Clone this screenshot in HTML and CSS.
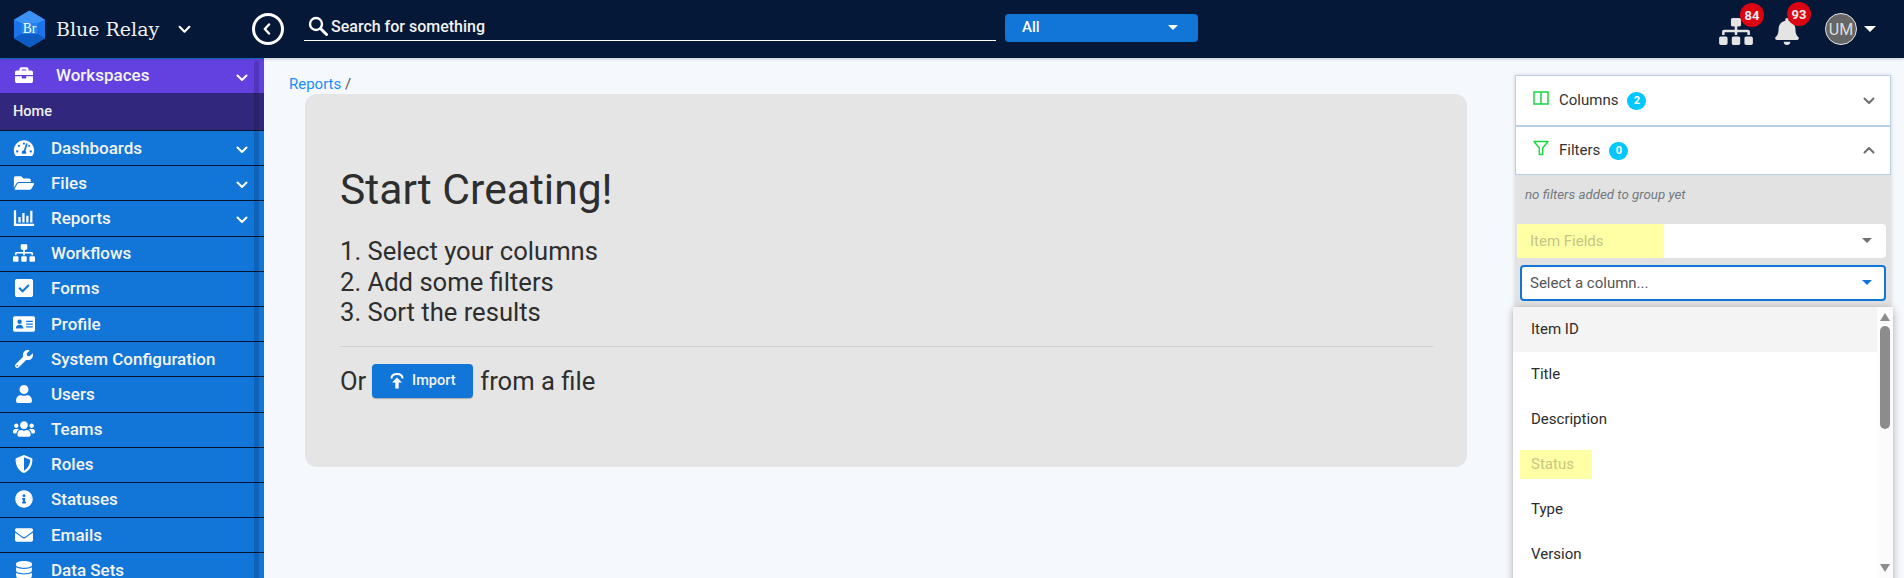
FILE: index.html
```html
<!DOCTYPE html>
<html lang="en">
<head>
<meta charset="utf-8">
<title>Blue Relay</title>
<link rel="stylesheet" href="styles.css">
</head>
<body>
<svg class="defs" aria-hidden="true">
  <symbol id="i-brief" viewBox="0 0 512 512"><path d="M320 336c0 8.84-7.16 16-16 16h-96c-8.84 0-16-7.16-16-16v-48H0v144c0 25.6 22.4 48 48 48h416c25.6 0 48-22.4 48-48V288H320v48zm144-208h-80V80c0-25.6-22.4-48-48-48H176c-25.6 0-48 22.4-48 48v48H48c-25.6 0-48 22.4-48 48v80h512v-80c0-25.6-22.4-48-48-48zm-144 0H192V96h128v32z"/></symbol>
  <symbol id="i-gauge" viewBox="0 0 576 512"><path d="M288 32C128.94 32 0 160.94 0 320c0 52.8 14.25 102.26 39.06 144.8 5.61 9.62 16.3 15.2 27.44 15.2h443c11.14 0 21.83-5.58 27.44-15.2C561.75 422.26 576 372.8 576 320c0-159.06-128.94-288-288-288zm0 64c14.71 0 26.58 10.13 30.32 23.65-1.11 2.26-2.64 4.23-3.45 6.67l-9.22 27.67c-5.13 3.49-10.97 6.01-17.64 6.01-17.67 0-32-14.33-32-32S270.33 96 288 96zM96 384c-17.67 0-32-14.33-32-32s14.33-32 32-32 32 14.33 32 32-14.33 32-32 32zm48-160c-17.67 0-32-14.33-32-32s14.33-32 32-32 32 14.33 32 32-14.33 32-32 32zm246.77-72.41l-61.33 184C343.13 347.33 352 364.54 352 384c0 11.72-3.38 22.55-8.88 32H232.88c-5.5-9.45-8.88-20.28-8.88-32 0-33.94 26.5-61.43 59.9-63.59l61.34-184.01c4.17-12.56 17.73-19.45 30.36-15.17 12.57 4.19 19.35 17.79 15.17 30.36zm14.66 57.2l15.52-46.55c3.47-1.29 7.13-2.23 11.05-2.23 17.67 0 32 14.33 32 32s-14.33 32-32 32c-11.38-.01-20.89-6.28-26.57-15.22zM480 384c-17.67 0-32-14.33-32-32s14.33-32 32-32 32 14.33 32 32-14.33 32-32 32z"/></symbol>
  <symbol id="i-folder" viewBox="0 0 576 512"><path d="M572.694 292.093L500.27 416.248A63.997 63.997 0 0 1 444.989 448H45.025c-18.523 0-30.064-20.093-20.731-36.093l72.424-124.155A64 64 0 0 1 152 256h399.964c18.523 0 30.064 20.093 20.73 36.093zM152 224h328v-48c0-26.51-21.49-48-48-48H272l-64-64H48C21.49 64 0 85.49 0 112v278.046l69.077-118.418C86.214 242.25 117.989 224 152 224z"/></symbol>
  <symbol id="i-chart" viewBox="0 0 18 16"><path d="M0 1h2v12h16v2H0z"/><path d="M4 7h2v5H4zM7.5 3.5h2V12h-2zM11 6h2v6h-2zM14.500 1.500h2V12h-2z"/></symbol>
  <symbol id="i-sitemap" viewBox="0 0 640 512"><path d="M128 352H32c-17.67 0-32 14.33-32 32v96c0 17.67 14.33 32 32 32h96c17.67 0 32-14.33 32-32v-96c0-17.67-14.33-32-32-32zm-24-80h192v48h48v-48h192v48h48v-57.59c0-21.17-17.23-38.41-38.41-38.41H344v-64h40c17.67 0 32-14.33 32-32V32c0-17.67-14.33-32-32-32H256c-17.67 0-32 14.33-32 32v96c0 17.67 14.33 32 32 32h40v64H94.41C73.23 224 56 241.23 56 262.41V320h48v-48zm264 80h-96c-17.67 0-32 14.33-32 32v96c0 17.67 14.33 32 32 32h96c17.67 0 32-14.33 32-32v-96c0-17.67-14.33-32-32-32zm240 0h-96c-17.67 0-32 14.33-32 32v96c0 17.67 14.33 32 32 32h96c17.67 0 32-14.33 32-32v-96c0-17.67-14.33-32-32-32z"/></symbol>
  <symbol id="i-check" viewBox="0 0 16 16"><path fill-rule="evenodd" d="M1.500 0h13A1.500 1.500 0 0 1 16 1.500v13a1.500 1.500 0 0 1-1.500 1.500h-13A1.500 1.500 0 0 1 0 14.500v-13A1.500 1.500 0 0 1 1.500 0zM6.700 12.200l6.300-6.300-1.300-1.300-5 5-2.400-2.400L3 8.500z"/></symbol>
  <symbol id="i-id" viewBox="0 0 20 16"><path fill-rule="evenodd" d="M1.500 1h17A1.500 1.500 0 0 1 20 2.500v11a1.500 1.500 0 0 1-1.500 1.500h-17A1.500 1.500 0 0 1 0 13.500v-11A1.500 1.500 0 0 1 1.500 1zM6 4a2 2 0 1 0 0 4 2 2 0 0 0 0-4zM2.500 12h7c0-2-1.500-3.300-3.500-3.300S2.500 10 2.500 12zM12 5v1.200h6V5zM12 7.500v1.200h6V7.500zM12 10v1.200h6V10z"/></symbol>
  <symbol id="i-wrench" viewBox="0 0 512 512"><path d="M507.73 109.1c-2.24-9.03-13.54-12.09-20.12-5.51l-74.36 74.36-67.88-11.31-11.31-67.88 74.36-74.36c6.62-6.62 3.43-17.9-5.66-20.16-47.38-11.74-99.55.91-136.58 37.93-39.64 39.64-50.55 97.1-34.05 147.2L18.74 402.76c-24.99 24.99-24.99 65.51 0 90.5 24.99 24.99 65.51 24.99 90.5 0l213.21-213.21c50.12 16.71 107.47 5.68 147.37-34.22 37.07-37.07 49.7-89.32 37.91-136.73zM64 472c-13.25 0-24-10.75-24-24 0-13.26 10.75-24 24-24s24 10.74 24 24c0 13.25-10.75 24-24 24z"/></symbol>
  <symbol id="i-user" viewBox="0 0 448 512"><path d="M224 256c70.7 0 128-57.3 128-128S294.7 0 224 0 96 57.3 96 128s57.3 128 128 128zm89.6 32h-16.7c-22.2 10.2-46.9 16-72.9 16s-50.6-5.800-72.9-16h-16.7C60.2 288 0 348.2 0 422.4V464c0 26.500 21.500 48 48 48h352c26.500 0 48-21.500 48-48v-41.600c0-74.200-60.200-134.400-134.400-134.400z"/></symbol>
  <symbol id="i-users" viewBox="0 0 640 512"><path d="M96 224c35.300 0 64-28.700 64-64s-28.700-64-64-64-64 28.700-64 64 28.700 64 64 64zm448 0c35.300 0 64-28.700 64-64s-28.700-64-64-64-64 28.700-64 64 28.700 64 64 64zm32 32h-64c-17.600 0-33.500 7.100-45.100 18.600 40.300 22.100 68.900 62 75.100 109.400h66c17.700 0 32-14.300 32-32v-32c0-35.300-28.700-64-64-64zm-256 0c61.900 0 112-50.100 112-112S381.900 32 320 32 208 82.100 208 144s50.100 112 112 112zm76.800 32h-8.300c-20.800 10-43.900 16-68.500 16s-47.600-6-68.500-16h-8.300C179.600 288 128 339.600 128 403.200V432c0 26.500 21.500 48 48 48h288c26.500 0 48-21.500 48-48v-28.800c0-63.600-51.600-115.200-115.200-115.200zm-223.700-13.400C161.500 263.100 145.600 256 128 256H64c-35.300 0-64 28.700-64 64v32c0 17.700 14.300 32 32 32h65.900c6.300-47.400 34.900-87.300 75.200-109.400z"/></symbol>
  <symbol id="i-shield" viewBox="0 0 512 512"><path d="M466.500 83.700l-192-80a48.150 48.150 0 0 0-36.900 0l-192 80C27.700 91.100 16 108.600 16 128c0 198.500 114.500 335.700 221.500 380.300 11.800 4.900 25.100 4.900 36.900 0C360.100 472.600 496 349.300 496 128c0-19.400-11.700-36.900-29.500-44.300zM256.100 446.300l-.1-381 175.900 73.300c-3.300 151.400-82.100 261.100-175.800 307.700z"/></symbol>
  <symbol id="i-info" viewBox="0 0 512 512"><path d="M256 8C119.043 8 8 119.083 8 256c0 136.997 111.043 248 248 248s248-111.003 248-248C504 119.083 392.957 8 256 8zm0 110c23.196 0 42 18.804 42 42s-18.804 42-42 42-42-18.804-42-42 18.804-42 42-42zm56 254c0 6.627-5.373 12-12 12h-88c-6.627 0-12-5.373-12-12v-24c0-6.627 5.373-12 12-12h12v-64h-12c-6.627 0-12-5.373-12-12v-24c0-6.627 5.373-12 12-12h64c6.627 0 12 5.373 12 12v100h12c6.627 0 12 5.373 12 12v24z"/></symbol>
  <symbol id="i-mail" viewBox="0 0 512 512"><path d="M502.300 190.800c3.900-3.100 9.700-.2 9.700 4.700V400c0 26.500-21.500 48-48 48H48c-26.500 0-48-21.500-48-48V195.600c0-5 5.700-7.800 9.700-4.700 22.400 17.400 52.100 39.500 154.100 113.600 21.100 15.400 56.700 47.800 92.200 47.600 35.700.3 72-32.800 92.300-47.600 102-74.100 131.600-96.300 154-113.700zM256 320c23.200.4 56.600-29.200 73.400-41.400 132.700-96.300 142.800-104.700 173.400-128.700 5.800-4.500 9.200-11.500 9.200-18.900v-19c0-26.500-21.500-48-48-48H48C21.500 64 0 85.500 0 112v19c0 7.400 3.400 14.300 9.200 18.900 30.600 23.900 40.700 32.400 173.400 128.700 16.800 12.200 50.200 41.800 73.400 41.400z"/></symbol>
  <symbol id="i-db" viewBox="0 0 448 512"><path d="M448 73.143v45.714C448 159.143 347.667 192 224 192S0 159.143 0 118.857V73.143C0 32.857 100.333 0 224 0s224 32.857 224 73.143zM448 176v102.857C448 319.143 347.667 352 224 352S0 319.143 0 278.857V176c48.125 33.143 136.208 48.572 224 48.572S399.874 209.143 448 176zm0 160v102.857C448 479.143 347.667 512 224 512S0 479.143 0 438.857V336c48.125 33.143 136.208 48.572 224 48.572S399.874 369.143 448 336z"/></symbol>
  <symbol id="i-bell" viewBox="0 0 448 512"><path d="M224 512c35.320 0 63.970-28.650 63.970-64H160.030c0 35.350 28.650 64 63.970 64zm215.390-149.710c-19.320-20.760-55.470-51.990-55.470-154.290 0-77.700-54.480-139.900-127.940-155.160V32c0-17.670-14.320-32-31.980-32s-31.980 14.330-31.980 32v20.840C118.560 68.100 64.080 130.300 64.080 208c0 102.300-36.150 133.530-55.470 154.290-6 6.450-8.660 14.160-8.610 21.710.11 16.400 12.980 32 32.100 32h383.800c19.120 0 32-15.600 32.100-32 .05-7.550-2.610-15.270-8.610-21.710z"/></symbol>
  <symbol id="i-chev" viewBox="0 0 12 8"><path d="M1.500 1.500L6 6l4.500-4.500" fill="none" stroke="currentColor" stroke-width="2" stroke-linecap="round" stroke-linejoin="round"/></symbol>
</svg>

<header class="topbar">
  <div class="brand">
    <svg class="logo" viewBox="0 0 34 38">
      <path d="M17 0L33 9.500V28.500L17 38L1 28.500V9.500z" fill="#1a73e8"/>
      <path d="M17 0L33 9.500L25 13H9L1 9.500z" fill="#3d92f5"/>
      <path d="M1 28.500L9 24H25L33 28.500L17 38z" fill="#0d5cc4"/>
      <path d="M9 13H25V24H9z" fill="#2584f0"/>
      <text x="17" y="23.500" class="logo-text" text-anchor="middle">Br</text>
    </svg>
    <span class="brand-name">Blue Relay</span>
    <svg class="brand-chev"><use href="#i-chev"/></svg>
  </div>
  <button class="back" type="button">
    <svg class="back-chev" viewBox="0 0 8 12"><path d="M6 1.500L1.800 6L6 10.500" fill="none" stroke="#fff" stroke-width="2.400" stroke-linecap="round" stroke-linejoin="round"/></svg>
  </button>
  <div class="search">
    <svg class="search-icon" viewBox="0 0 20 20"><circle cx="8" cy="8" r="6" fill="none" stroke="#fff" stroke-width="2.400"/><path d="M12.500 12.500L18.500 18.500" stroke="#fff" stroke-width="3" stroke-linecap="round"/></svg>
    <span>Search for something</span>
  </div>
  <div class="scope"><span>All</span><i class="caret caret-white"></i></div>
  <div class="top-right">
    <div class="notif notif-tree">
      <svg class="tree"><use href="#i-sitemap"/></svg>
      <span class="count">84</span>
    </div>
    <div class="notif notif-bell">
      <svg class="bell"><use href="#i-bell"/></svg>
      <span class="count">93</span>
    </div>
    <div class="avatar">UM</div>
    <i class="caret caret-white caret-user"></i>
  </div>
</header>

<div class="body-row">
  <nav class="sidebar">
    <a class="nav nav-ws"><svg class="ico"><use href="#i-brief"/></svg><span class="lbl">Workspaces</span><svg class="chev"><use href="#i-chev"/></svg></a>
    <a class="nav-home">Home</a>
    <a class="nav"><svg class="ico ico-wide"><use href="#i-gauge"/></svg><span class="lbl">Dashboards</span><svg class="chev"><use href="#i-chev"/></svg></a>
    <a class="nav"><svg class="ico ico-wide"><use href="#i-folder"/></svg><span class="lbl">Files</span><svg class="chev"><use href="#i-chev"/></svg></a>
    <a class="nav"><svg class="ico"><use href="#i-chart"/></svg><span class="lbl">Reports</span><svg class="chev"><use href="#i-chev"/></svg></a>
    <a class="nav"><svg class="ico ico-wide"><use href="#i-sitemap"/></svg><span class="lbl">Workflows</span></a>
    <a class="nav"><svg class="ico"><use href="#i-check"/></svg><span class="lbl">Forms</span></a>
    <a class="nav"><svg class="ico ico-wide"><use href="#i-id"/></svg><span class="lbl">Profile</span></a>
    <a class="nav"><svg class="ico"><use href="#i-wrench"/></svg><span class="lbl">System Configuration</span></a>
    <a class="nav"><svg class="ico"><use href="#i-user"/></svg><span class="lbl">Users</span></a>
    <a class="nav"><svg class="ico ico-wide"><use href="#i-users"/></svg><span class="lbl">Teams</span></a>
    <a class="nav"><svg class="ico"><use href="#i-shield"/></svg><span class="lbl">Roles</span></a>
    <a class="nav"><svg class="ico"><use href="#i-info"/></svg><span class="lbl">Statuses</span></a>
    <a class="nav"><svg class="ico"><use href="#i-mail"/></svg><span class="lbl">Emails</span></a>
    <a class="nav"><svg class="ico"><use href="#i-db"/></svg><span class="lbl">Data Sets</span></a>
    <div class="side-scroll"></div>
  </nav>

  <main class="main">
    <div class="crumbs"><a>Reports</a> <span>/</span></div>
    <section class="card">
      <h1>Start Creating!</h1>
      <ol class="steps">
        <li>1. Select your columns</li>
        <li>2. Add some filters</li>
        <li>3. Sort the results</li>
      </ol>
      <hr>
      <div class="or-row">
        <span>Or</span>
        <button class="import" type="button">
          <svg viewBox="0 0 14 16"><path d="M1.500 5.500C1.500 2.500 4 1 7 1s5.500 1.500 5.500 4.500" fill="none" stroke="#fff" stroke-width="2"/><path d="M7 4.500L12 9.500H8.700V15.500H5.300V9.500H2z" fill="#fff"/></svg>
          Import
        </button>
        <span>from a file</span>
      </div>
    </section>
  </main>

  <aside class="panel">
    <div class="acc">
      <svg class="acc-ico" viewBox="0 0 16 14"><path d="M1 1h14v12H1zM8 1v12" fill="none" stroke="#17d93f" stroke-width="1.500"/></svg>
      <span class="acc-title">Columns</span><span class="pill">2</span>
      <svg class="acc-chev"><use href="#i-chev"/></svg>
    </div>
    <div class="acc acc-open">
      <svg class="acc-ico" viewBox="0 0 16 16"><path d="M1 1.500h14L9.700 8v6.500H6.300V8z" fill="none" stroke="#17d93f" stroke-width="1.400" stroke-linejoin="round"/></svg>
      <span class="acc-title">Filters</span><span class="pill">0</span>
      <svg class="acc-chev acc-chev-up"><use href="#i-chev"/></svg>
    </div>
    <div class="filters">
      <p class="empty">no filters added to group yet</p>
      <div class="select">
        <span class="hl-fields">Item Fields</span>
        <i class="caret caret-grey"></i>
      </div>
      <div class="select select-focus">
        <span>Select a column...</span>
        <i class="caret caret-blue"></i>
      </div>
    </div>
    <div class="menu">
      <ul class="options">
        <li class="opt-active">Item ID</li>
        <li>Title</li>
        <li>Description</li>
        <li class="opt-status"><span class="hl-status">Status</span></li>
        <li>Type</li>
        <li>Version</li>
      </ul>
      <div class="vscroll">
        <i class="arrow-up"></i>
        <div class="thumb"></div>
        <i class="arrow-down"></i>
      </div>
    </div>
  </aside>
</div>
</body>
</html>
```

FILE: styles.css
```css
* { box-sizing: border-box; }
html, body { margin: 0; height: 100%; overflow: hidden; }
body {
  font-family: Roboto, "Liberation Sans", sans-serif;
  background: #f5f9fe;
  color: #2e2e2e;
  display: flex;
  flex-direction: column;
}
.defs { width: 0; height: 0; position: absolute; }

.topbar {
  height: 58px;
  flex: none;
  background: #051838;
  display: flex;
  align-items: center;
  color: #fff;
  box-shadow: 0 1px 3px rgba(0, 0, 0, .2);
  position: relative;
  z-index: 3;
}
.brand { display: flex; align-items: center; width: 252px; padding-left: 13px; }
.logo { width: 33px; height: 38px; flex: none; }
.logo-text { font-family: "Liberation Serif", serif; font-size: 14px; fill: #fff; }
.brand-name {
  font-family: "DejaVu Serif", serif;
  font-size: 19px;
  margin-left: 10px;
  color: #f0f0f0;
  width: 122px;
  white-space: nowrap;
}
.brand-chev { width: 13px; height: 9px; color: #fff; }
.back {
  width: 32px; height: 32px; border: 3px solid #fff; border-radius: 50%;
  background: none; padding: 0; display: flex; align-items: center; justify-content: center;
  margin-right: 20px;
}
.back-chev { width: 8px; height: 12px; margin-right: 3px; }
.search {
  width: 692px; height: 28px;
  border-bottom: 1.500px solid #fff;
  display: flex; align-items: center; padding-left: 4px;
  font-size: 16px; font-weight: 500; color: #f2f2f2;
  margin-top: -5px;
}
.search-icon { width: 20px; height: 20px; margin-right: 3px; flex: none; }
.scope {
  margin-left: 9px; width: 193px; height: 28px; background: #1275d8; border-radius: 4px;
  display: flex; align-items: center; justify-content: space-between;
  padding: 0 20px 2px 17px; font-size: 15px; font-weight: 500; margin-top: -2px;
}
.caret { width: 0; height: 0; display: block; border-left: 5.500px solid transparent; border-right: 5.500px solid transparent; border-top: 5.500px solid; }
.caret-white { color: #fff; }
.caret-grey { color: #707070; }
.caret-blue { color: #1275d8; }
.top-right { margin-left: auto; display: flex; align-items: center; padding-right: 28px; color: #e4e4e4; }
.notif { position: relative; display: flex; }
.notif-tree { margin-right: 22px; }
.notif-bell { margin-right: 26px; }
.tree { width: 34px; height: 27px; fill: #e4e4e4; margin-top: 5px; }
.bell { width: 24px; height: 27px; fill: #e4e4e4; margin-top: 5px; }
.count {
  position: absolute; width: 24px; height: 24px; border-radius: 50%;
  background: #dc0410; color: #ececec; font-size: 13px; font-weight: 700;
  display: flex; align-items: center; justify-content: center;
}
.notif-tree .count { left: 21px; top: -10px; }
.notif-bell .count { left: 12px; top: -11px; }
.avatar {
  width: 32px; height: 32px; border-radius: 50%; background: #666; border: 1px solid #e4e4e4;
  display: flex; align-items: center; justify-content: center; font-size: 16px; color: #ddd;
  margin-right: 7px;
}
.caret-user { border-left-width: 6px; border-right-width: 6px; border-top-width: 6px; }

.body-row { flex: 1; display: flex; min-height: 0; position: relative; }
.sidebar {
  width: 264px; flex: none; background: #1275d8; position: relative; overflow: hidden;
  padding-top: 1px;
}
.nav {
  height: 35.200px;
  display: flex; align-items: center;
  color: #f4f4f4; font-size: 17px; font-weight: 500;
  padding-left: 13px; padding-bottom: 1px;
  border-top: 1.500px solid #06142e;
  position: relative;
}
.ico { width: 22px; height: 18px; flex: none; fill: #fff; margin-right: 16px; }
.ico-wide { width: 22px; }
.lbl { white-space: nowrap; }
.chev { width: 12px; height: 8px; position: absolute; left: 236px; top: 15px; color: #fff; }
.nav-ws { height: 34px; background: #6340e0; border-top: 0; padding-bottom: 2px; }
.nav-ws .ico { margin-left: 0; margin-right: 21px; }
.nav-ws .chev { top: 15px; }
.nav-home {
  display: flex; align-items: center; height: 37px; padding: 0 0 0 13px;
  background: #31287e; color: #f0f0f0; font-size: 14.500px; font-weight: 500;
}
.side-scroll {
  position: absolute; left: 254px; top: 3px; bottom: 0; width: 5px;
  background: rgba(0, 0, 0, .16); border-radius: 3px 3px 0 0;
}

.main { flex: none; width: 1251px; padding-top: 17px; }
.crumbs { margin-left: 25px; height: 19px; font-size: 15px; line-height: 18px; color: #555; }
.crumbs a { color: #1a8cff; }
.card {
  margin-left: 41px; width: 1162px; height: 373px; background: #e5e5e5; border-radius: 12px;
  padding: 70px 34px 0 35px;
}
.card h1 { margin: 0; font-size: 42.600px; line-height: 50px; font-weight: 400; color: #2e2e2e; }
.steps { list-style: none; margin: 22px 0 0; padding: 0; font-size: 25.600px; line-height: 30.500px; }
hr { border: 0; border-top: 1px solid #cfcfcf; margin: 18px 0 0; }
.or-row { display: flex; align-items: center; margin-top: 17px; font-size: 25.600px; height: 34px; }
.import {
  margin: 0 7px 0 6px; width: 101px; height: 34px; background: #1275d8; border: 0; border-radius: 4px;
  color: #f4f4f4; font: 500 14.500px Roboto, sans-serif;
  display: flex; align-items: center; justify-content: center; gap: 8px;
  box-shadow: 0 1px 1px rgba(0, 0, 0, .25);
}
.import svg { width: 14px; height: 16px; }

.panel { width: 376px; flex: none; margin-top: 17px; position: relative; display: flex; flex-direction: column; box-shadow: 0 0 4px rgba(0,0,0,.15); }
.acc {
  height: 50.500px; background: #fff; border: 1px solid #b9cfe8; border-width: 1px 1px 1.500px;
  display: flex; align-items: center; padding-left: 17px; position: relative; font-size: 15px; color: #333;
}
.acc-open { height: 49px; padding-top: 0; }
.acc-ico { width: 16px; height: 16px; flex: none; margin-right: 10px; margin-top: -5px; }
.acc-title { margin-top: 0; }
.pill {
  margin-left: 9px; margin-top: 1px; height: 18px; min-width: 19px; border-radius: 9px; background: #00c8ff; color: #fff;
  font-size: 11px; font-weight: 700; display: flex; align-items: center; justify-content: center; padding: 0 5px;
}
.acc-chev { position: absolute; right: 15px; top: 21px; width: 12px; height: 8px; color: #6f6f6f; }
.acc-chev-up { transform: rotate(180deg); top: 19px; }
.filters { flex: 1; background: #e2e2e2; padding: 11px 5px 0; }
.empty { margin: 0 0 20px 5px; font-size: 13.300px; line-height: 18px; font-style: italic; color: #727a80; }
.select {
  height: 34px; background: #fff; border-radius: 4px; display: flex; align-items: center;
  justify-content: space-between; padding: 0 14px 0 10px; font-size: 15px; color: #555; margin-bottom: 7px;
  position: relative;
}
.hl-fields {
  position: absolute; left: -3px; top: 0; bottom: 0; width: 147px; background: #ffffa5;
  color: #c5c586; display: flex; align-items: center; padding-left: 13px;
}
.caret-grey, .caret-blue { margin-left: auto; }
.select-focus { height: 36px; border: 2px solid #1275d8; padding: 0 12px 0 8px; }
.menu {
  position: absolute; left: -2px; width: 380px; top: 232px; height: 300px; background: #fff;
  box-shadow: 0 2px 8px rgba(0, 0, 0, .3); border-radius: 3px 3px 0 0; display: flex; z-index: 2;
}
.options { list-style: none; margin: 0; padding: 0; flex: 1; font-size: 15px; color: #2c2c2c; }
.options li { height: 45px; display: flex; align-items: center; padding: 0 0 2px 18px; }
.options .opt-active { background: #f4f4f4; }
.options .opt-status { position: relative; align-items: flex-start; padding: 11px 0 0 18px; }
.hl-status {
  position: relative; background: #ffffa5; color: #c9c77f; margin-left: -11px; margin-top: -3px;
  padding: 3px 0 4px 11px; line-height: 22px; height: 29px; width: 72px;
}
.vscroll { width: 16px; background: #fcfbfb; display: flex; flex-direction: column; align-items: center; position: relative; height: 271px; }
.thumb { width: 10px; height: 103px; background: #8c8c8c; border-radius: 5px; margin-top: 5px; }
.arrow-up, .arrow-down { width: 0; height: 0; border-left: 5.500px solid transparent; border-right: 5.500px solid transparent; }
.arrow-up { border-bottom: 8px solid #8c8c8c; margin-top: 6px; }
.arrow-down { border-top: 8px solid #8c8c8c; position: absolute; bottom: 6px; }
```
